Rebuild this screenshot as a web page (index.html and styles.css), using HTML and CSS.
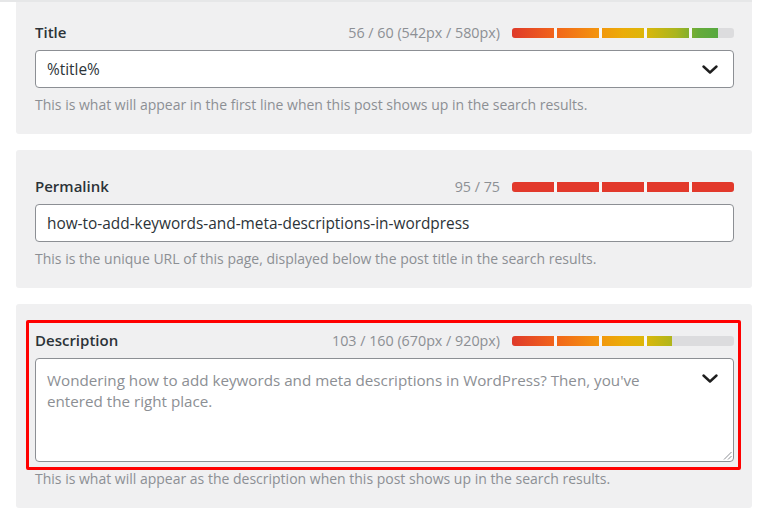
FILE: index.html
```html
<!DOCTYPE html>
<html lang="en">
<head>
<meta charset="utf-8">
<title>Snippet settings</title>
<link rel="stylesheet" href="styles.css">
</head>
<body>
<div class="topline"></div>
<div class="cards">
  <section class="card card-first">
    <div class="row">
      <span class="label">Title</span>
      <div class="meter">
        <span class="count">56 / 60 (542px / 580px)</span>
        <div class="bar"><div class="fill" style="width:92.8%"></div></div>
      </div>
    </div>
    <div class="field">
      <span class="value">%title%</span>
      <svg class="chev" width="16" height="9" viewBox="0 0 16 9"><path d="M1.5 1.5 L8 7.5 L14.5 1.5" fill="none" stroke="#1e1e1e" stroke-width="2.4" stroke-linecap="round" stroke-linejoin="round"/></svg>
    </div>
    <p class="help">This is what will appear in the first line when this post shows up in the search results.</p>
  </section>

  <section class="card">
    <div class="row">
      <span class="label">Permalink</span>
      <div class="meter">
        <span class="count">95 / 75</span>
        <div class="bar"><div class="fill fill-over" style="width:100%"></div></div>
      </div>
    </div>
    <div class="field">
      <span class="value">how-to-add-keywords-and-meta-descriptions-in-wordpress</span>
    </div>
    <p class="help">This is the unique URL of this page, displayed below the post title in the search results.</p>
  </section>

  <section class="card card-desc">
    <div class="highlight"></div>
    <div class="row">
      <span class="label">Description</span>
      <div class="meter">
        <span class="count">103 / 160 (670px / 920px)</span>
        <div class="bar"><div class="fill" style="width:72.2%"></div></div>
      </div>
    </div>
    <div class="field field-area">
      <span class="placeholder">Wondering how to add keywords and meta descriptions in WordPress? Then, you've entered the right place.</span>
      <svg class="chev chev-area" width="16" height="9" viewBox="0 0 16 9"><path d="M1.5 1.5 L8 7.5 L14.5 1.5" fill="none" stroke="#1e1e1e" stroke-width="2.4" stroke-linecap="round" stroke-linejoin="round"/></svg>
      <svg class="grip" width="9" height="9" viewBox="0 0 9 9"><path d="M8.5 1 L1 8.5 M8.5 5 L5 8.5" stroke="#8c8f94" stroke-width="1"/></svg>
    </div>
    <p class="help">This is what will appear as the description when this post shows up in the search results.</p>
  </section>
</div>
</body>
</html>
```

FILE: styles.css
```css
html, body {
  margin: 0;
  padding: 0;
  background: #ffffff;
  font-family: "Open Sans", "Noto Sans", "Liberation Sans", sans-serif;
  height: 508px;
  overflow: hidden;
}

.topline {
  width: 752px;
  height: 2px;
  background: #e6e7e8;
}

.cards {
  display: flex;
  flex-direction: column;
  gap: 16px;
  margin-left: 16px;
  width: 736px;
}

.card {
  position: relative;
  background: #f0f0f1;
  border-radius: 3px;
  padding: 27px 18px 19px 19px;
}

.card-first {
  padding-top: 21px;
  border-radius: 0 0 3px 3px;
}

.row {
  display: flex;
  align-items: center;
  justify-content: space-between;
  height: 20px;
  margin-bottom: 7px;
}

.label {
  font-size: 15px;
  font-weight: 600;
  color: #2c3338;
  margin-top: -2px;
}

.meter {
  display: flex;
  align-items: center;
  gap: 12px;
}

.count {
  font-size: 14.3px;
  color: #8c8f94;
  margin-top: -1px;
}

.bar {
  width: 222px;
  height: 10px;
  border-radius: 3px;
  background: #dcdcde;
  overflow: hidden;
}

.fill {
  position: relative;
  height: 100%;
  overflow: hidden;
  background: linear-gradient(90deg, #df3a2a 0%, #f2661a 20%, #f3930f 38%, #ebac08 50%, #dcb70a 60%, #a9b51e 74%, #66ab3a 84%, #4aa645 100%);
  background-size: 222px 100%;
}

.fill-over {
  background: #e2392b;
}

.fill::after {
  content: "";
  position: absolute;
  top: 0;
  bottom: 0;
  left: 0;
  width: 222px;
  background: repeating-linear-gradient(90deg, transparent 0 42px, #f7f7f7 42px 45px);
}

.field {
  position: relative;
  display: flex;
  align-items: center;
  justify-content: space-between;
  box-sizing: border-box;
  height: 38px;
  background: #ffffff;
  border: 1px solid #8c8f94;
  border-radius: 4px;
  padding: 0 15px 0 11px;
}

.value {
  font-size: 15.4px;
  color: #2c3338;
}

.field-area {
  height: 104px;
  align-items: flex-start;
  padding-top: 11px;
}

.placeholder {
  font-size: 15.2px;
  line-height: 21px;
  color: #8c8f94;
  width: 620px;
}

.chev-area {
  margin-top: 4px;
}

.grip {
  position: absolute;
  right: 1px;
  bottom: 1px;
}

.help {
  margin: 7px 0 0;
  font-size: 14px;
  line-height: 20px;
  color: #8c8f94;
}

.highlight {
  position: absolute;
  left: 10px;
  top: 16px;
  width: 715px;
  height: 150px;
  box-sizing: border-box;
  border: 3px solid #ff0000;
  border-radius: 2px;
  pointer-events: none;
}
```
